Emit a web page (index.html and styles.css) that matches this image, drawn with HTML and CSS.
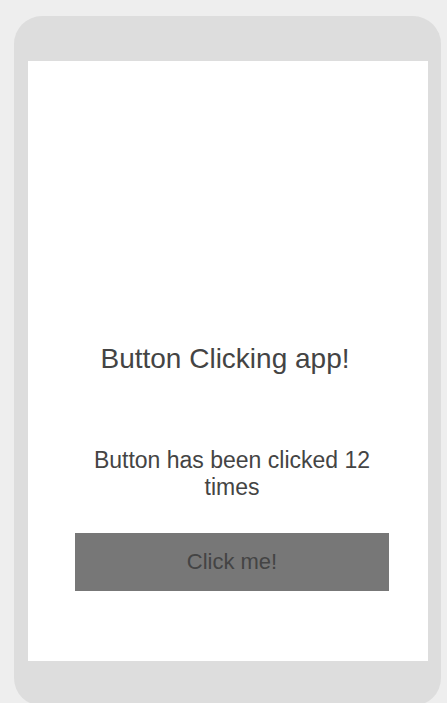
FILE: index.html
```html
<!DOCTYPE html>
<html>
<head>
<meta charset="utf-8">
<link rel="stylesheet" href="styles.css">
</head>
<body>
<div class="phone">
  <div class="screen">
    <h1 class="title">Button Clicking app!</h1>
    <div class="panel">
      <p class="count">Button has been clicked 12 times</p>
      <button class="btn">Click me!</button>
    </div>
  </div>
</div>
</body>
</html>
```
FILE: styles.css
```css
html, body {
  margin: 0;
  padding: 0;
  background: #eeeeee;
  height: 100%;
  overflow: hidden;
}
body {
  padding: 16px 6px 0 14px;
  font-family: "Liberation Sans", Arial, sans-serif;
  color: #444444;
}
.phone {
  width: 400px;
  height: 600px;
  padding: 45px 13px 45px 14px;
  background: #dddddd;
  border-radius: 28px;
}
.screen {
  width: 400px;
  height: 600px;
  background: #ffffff;
  display: flex;
  flex-direction: column;
  align-items: center;
  justify-content: flex-end;
  padding-bottom: 70px;
  box-sizing: border-box;
}
.title {
  margin: 0 6px 72px 0;
  font-size: 28px;
  font-weight: normal;
  line-height: 32px;
  text-align: center;
}
.panel {
  width: 314px;
  margin-left: 8px;
  display: flex;
  flex-direction: column;
  align-items: stretch;
}
.count {
  margin: 0 0 32px 0;
  font-size: 23px;
  line-height: 27px;
  text-align: center;
}
.btn {
  height: 58px;
  border: none;
  background: #777777;
  color: #444444;
  font-family: "Liberation Sans", Arial, sans-serif;
  font-size: 22px;
  padding: 0;
}
```
